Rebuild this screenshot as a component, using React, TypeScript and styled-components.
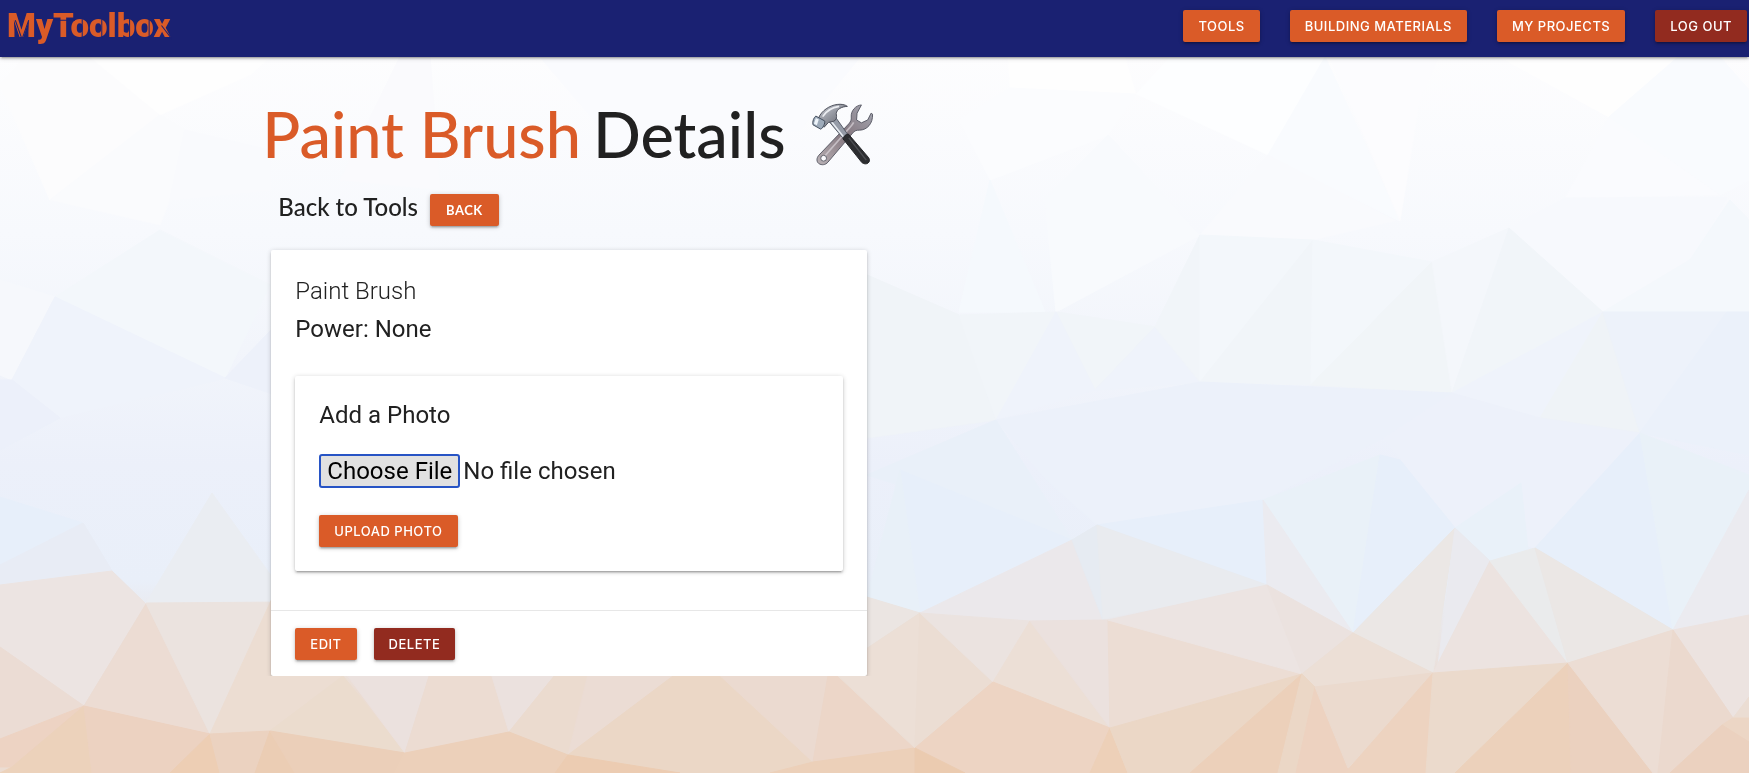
import React from "react";
import styled, { createGlobalStyle, css } from "styled-components";

const colors = {
  navy: "#1a2172",
  orange: "#da5b28",
  maroon: "#922b1f",
  ink: "#212121",
};

const raised =
  "0 2px 2px 0 rgba(0,0,0,0.14), 0 3px 1px -2px rgba(0,0,0,0.12), 0 1px 5px 0 rgba(0,0,0,0.2)";

const GlobalStyle = createGlobalStyle`
  *, *::before, *::after { box-sizing: border-box; }
  body {
    margin: 0;
    background: #eef2fa;
    color: ${colors.ink};
    font-family: Inter, "Liberation Sans", sans-serif;
    font-size: 16px;
    line-height: 24px;
  }
`;

const Backdrop = styled.svg`
  position: fixed;
  inset: 0;
  z-index: -1;
  width: 100%;
  height: 100%;
`;

const NavBar = styled.nav`
  display: flex;
  align-items: flex-start;
  justify-content: space-between;
  height: 57px;
  padding: 10px 2px 0 7px;
  background: ${colors.navy};
  box-shadow: ${raised};
`;

const Brand = styled.a`
  position: relative;
  color: ${colors.orange};
  font-family: Roboto, sans-serif;
  font-weight: 900;
  font-size: 33px;
  line-height: 32px;
  text-decoration: none;
`;

const StencilCuts = styled.svg`
  position: absolute;
  left: 0;
  top: 0;
  width: 170px;
  height: 35px;
  fill: none;
  stroke: ${colors.navy};
  stroke-width: 1;
`;

const NavLinks = styled.ul`
  display: flex;
  gap: 30px;
  margin: 0;
  padding: 0;
  list-style: none;
`;

const buttonLook = css<{ $danger?: boolean }>`
  display: inline-block;
  height: 32px;
  padding: 0 15px;
  border: 0;
  border-radius: 2px;
  background: ${(p) => (p.$danger ? colors.maroon : colors.orange)};
  box-shadow: ${raised};
  color: #fff;
  font-family: inherit;
  font-size: 13px;
  font-weight: 500;
  line-height: 32px;
  letter-spacing: 0.5px;
  text-align: center;
  text-decoration: none;
  text-transform: uppercase;
  white-space: nowrap;
  cursor: pointer;
`;

const LinkButton = styled.a<{ $danger?: boolean }>`
  ${buttonLook}
`;

const BackButton = styled(LinkButton)`
  padding: 0 16px;
  font-weight: 700;
`;

const Button = styled.button<{ $danger?: boolean }>`
  ${buttonLook}
`;

const Container = styled.main`
  width: 70%;
  margin: 0 auto;
`;

const Title = styled.h1`
  display: flex;
  align-items: center;
  gap: 26px;
  margin: 42px 0 25px;
  font-family: Lato, sans-serif;
  font-weight: 500;
  font-size: 63px;
  line-height: 70px;
`;

const TitleText = styled.span`
  display: flex;
  gap: 12px;
`;

const ToolName = styled.span`
  color: ${colors.orange};
`;

const ToolsIcon = styled.svg`
  width: 62px;
  height: 64px;
`;

const BackRow = styled.div`
  display: flex;
  align-items: flex-start;
  gap: 12px;
  padding: 0 16px;
  font-family: Lato, sans-serif;
`;

const BackLabel = styled.h2`
  margin: 0;
  font-weight: 500;
  font-size: 24px;
  line-height: 26px;
`;

const Column = styled.div`
  width: 50%;
  margin-top: 24px;
  padding: 0 7px 0 9px;
`;

const Card = styled.section`
  border-radius: 2px;
  background: #fff;
  box-shadow: ${raised};
`;

const CardContent = styled.div`
  padding: 24px;
`;

const cardType = css`
  font-family: Roboto, sans-serif;
  font-size: 24px;
`;

const CardTitle = styled.h3`
  ${cardType}
  margin: 0 0 2px;
  font-weight: 300;
  line-height: 34px;
`;

const CardText = styled.p`
  ${cardType}
  margin: 0;
  line-height: 38px;
`;

const PhotoCard = styled(Card)`
  margin: 28px 0 15px;
`;

const PhotoForm = styled.form`
  display: flex;
  flex-direction: column;
  align-items: flex-start;
  padding: 24px;
`;

const PhotoLabel = styled.label`
  ${cardType}
  line-height: 30px;
`;

const FileInput = styled.input`
  ${cardType}
  width: 100%;
  margin: 24px 0 27px;
  color: ${colors.ink};
  line-height: 30px;

  &::file-selector-button {
    margin: 0 3px 0 0;
    padding: 0 6px;
    border: 2px solid #2754c5;
    border-radius: 3px;
    background: #e1e1e1;
    color: #000;
    font: inherit;
    line-height: 30px;
  }
`;

const CardActions = styled.div`
  display: flex;
  gap: 17px;
  padding: 17px 24px 16px;
  border-top: 1px solid rgba(160, 160, 160, 0.25);
`;

const facets: [string, string][] = [
  ["#fcfcfd", "0,85 25,57 90,57 160,115 50,200"],
  ["#fafbfd", "160,115 185,130 170,200 160,225 50,200"],
  ["#fefefe", "90,57 270,57 250,75 160,115"],
  ["#f9fafd", "185,130 270,150 270,190 170,200"],
  ["#f6f8fc", "0,280 55,297 12,380 0,375"],
  ["#f3f7fb", "55,297 160,230 270,285 225,378"],
  ["#eff3fb", "12,380 55,297 225,378 60,418"],
  ["#edf1fa", "225,378 290,310 290,400"],
  ["#ecf0fa", "0,380 12,380 60,418 0,450"],
  ["#e7effa", "0,497 83,523 0,565"],
  ["#e8ecf5", "83,523 112,571 0,585 0,565"],
  ["#eaedf2", "212,493 290,602 146,603"],
  ["#fafbfe", "540,57 860,57 800,130 620,150"],
  ["#fafafd", "400,57 430,57 440,190 340,180"],
  ["#fefefe", "1008,57 1125,57 1136,94 1010,88"],
  ["#fbfcfe", "1010,88 1136,94 1108,135 990,180 959,120"],
  ["#fdfeff", "1136,94 1170,57 1325,57 1268,155"],
  ["#f9fbfe", "1325,57 1400,221 1268,155"],
  ["#fcfcfe", "1330,57 1438,57 1420,100 1400,221"],
  ["#fefefe", "1500,57 1678,57 1609,117"],
  ["#f9fbfe", "1678,57 1720,57 1749,90 1749,180 1720,195 1609,117"],
  ["#fafbfe", "1609,117 1720,195 1565,198"],
  ["#f8fafd", "1108,135 1200,235 1056,312 1045,200"],
  ["#f9fafd", "1268,155 1395,221 1313,240 1200,235"],
  ["#f5f9fd", "990,180 1045,312 959,312"],
  ["#f7f9fd", "1509,228 1565,198 1727,198 1690,260 1603,312"],
  ["#f4f8fc", "1730,200 1749,220 1749,312 1603,312 1690,260"],
  ["#f0f4f8", "867,275 959,315 996,420 867,438"],
  ["#f1f5f9", "959,315 1056,312 996,420"],
  ["#f1f5f9", "1056,312 1155,327 1095,390"],
  ["#eff3fb", "996,420 1056,312 1095,390"],
  ["#eff3fb", "1155,327 1200,382 1095,390"],
  ["#f1f5f9", "1155,327 1200,235 1200,382"],
  ["#f3f7fb", "1200,235 1313,240 1200,382"],
  ["#f1f5f9", "1313,240 1311,385 1200,382"],
  ["#f3f7fb", "1313,240 1432,262 1311,385"],
  ["#f1f5f8", "1432,262 1452,393 1311,385"],
  ["#f4f7fb", "1432,262 1509,228 1452,393"],
  ["#f1f5f9", "1509,228 1603,312 1452,393"],
  ["#eff3fb", "1603,312 1540,418 1452,393"],
  ["#eff3f7", "1603,312 1640,433 1540,418"],
  ["#edf2fa", "1603,312 1727,312 1640,433"],
  ["#ebf1fa", "1727,312 1749,312 1749,455 1640,433"],
  ["#ecf1fa", "996,420 1200,382 1452,393 1384,438 1263,500 1097,525 1047,480"],
  ["#edf1fa", "1452,393 1540,418 1640,433 1535,548 1455,528 1384,438"],
  ["#e9f0f9", "867,475 996,420 1072,540"],
  ["#e7effa", "900,470 1072,540 920,613"],
  ["#e8f0f8", "900,470 920,613 867,597"],
  ["#e7effa", "1097,525 1263,500 1267,585"],
  ["#e9f1f8", "1263,500 1380,455 1353,633"],
  ["#e7effa", "1380,455 1400,460 1455,528 1353,633"],
  ["#e9f1f9", "1455,528 1521,483 1528,550 1490,561"],
  ["#e7effa", "1535,548 1640,433 1673,630"],
  ["#e9f1f8", "1640,433 1749,475 1749,490 1673,630"],
  ["#ebe8eb", "920,613 1072,540 1103,620 1030,621"],
  ["#e6ebf2", "1072,540 1097,525 1103,620"],
  ["#e9ebef", "1097,525 1267,585 1103,619"],
  ["#ebebf0", "1263,500 1353,633 1267,585"],
  ["#ebe7e5", "1353,633 1455,528 1433,673"],
  ["#eaeaef", "1455,528 1490,561 1437,673"],
  ["#ece3e0", "1490,561 1568,663 1433,673"],
  ["#eaebec", "1490,561 1535,548 1568,663"],
  ["#ebe7e5", "1535,548 1673,630 1568,663"],
  ["#ebebf0", "1673,630 1749,490 1749,615"],
  ["#ece4e2", "0,585 112,571 146,604 84,706 0,647"],
  ["#ebdcd4", "0,647 84,706 0,739"],
  ["#ecdcd3", "146,604 210,734 84,706"],
  ["#ebe3df", "146,603 290,602 210,734"],
  ["#ecddd2", "285,570 343,676 270,731 210,734"],
  ["#ebdcce", "343,676 405,753 270,731"],
  ["#ebe1de", "343,670 431,670 405,753"],
  ["#edd3c3", "0,739 84,706 12,767 0,767"],
  ["#ecd2bb", "84,706 92,773 0,773 12,767"],
  ["#ecd2c1", "84,706 210,734 170,773 92,773"],
  ["#edceb4", "210,734 220,773 170,773"],
  ["#ebd2c0", "210,734 270,731 255,773 220,773"],
  ["#ebcdb4", "270,731 295,773 255,773"],
  ["#ebcfb9", "270,731 405,753 395,773 295,773"],
  ["#ecdcd2", "431,670 490,670 509,732 405,753"],
  ["#ebe1de", "490,670 559,670 509,732"],
  ["#ebdbcf", "559,670 589,670 568,755 509,732"],
  ["#ebdcd4", "589,670 681,670 568,755"],
  ["#ebd7c6", "681,670 714,670 813,762 770,773 680,773 568,755"],
  ["#ebdad0", "714,670 829,670 813,762"],
  ["#ecd6c8", "829,670 838,676 915,748 813,762"],
  ["#ecd0ba", "405,753 509,732 568,755 555,773 395,773"],
  ["#ecccb2", "568,755 680,773 555,773"],
  ["#ecd0b9", "813,762 915,748 915,773 770,773"],
  ["#ebe5e2", "860,595 920,613 860,653"],
  ["#ecdfd6", "920,613 915,748 838,676 860,653"],
  ["#ebddd3", "920,613 993,682 915,748"],
  ["#ebe3e0", "920,613 1030,621 993,682"],
  ["#ecdfd6", "1030,621 1110,728 993,682"],
  ["#ebe1de", "1030,621 1108,620 1110,728"],
  ["#ecddd4", "1108,620 1302,674 1110,728"],
  ["#ece4e2", "1108,620 1267,585 1302,674"],
  ["#ebe2df", "1267,585 1353,633 1302,674"],
  ["#ecdfd6", "1353,633 1433,673 1315,687 1302,674"],
  ["#edd4c3", "993,682 1110,728 1090,773 965,773 915,748"],
  ["#edd0b8", "1110,728 1128,773 1090,773"],
  ["#ebd7c6", "1110,728 1302,674 1190,773 1128,773"],
  ["#ecd0ba", "1302,674 1278,773 1190,773"],
  ["#ebcbb0", "915,748 965,773 915,773"],
  ["#ebd7c6", "1302,674 1315,687 1296,773 1278,773"],
  ["#edd2c0", "1315,687 1348,768 1348,773 1296,773"],
  ["#ebdace", "1315,687 1433,673 1348,768"],
  ["#edd3c0", "1433,673 1426,773 1345,773"],
  ["#ebdacc", "1433,673 1568,663 1455,773 1426,773"],
  ["#ecd1bb", "1568,663 1571,773 1455,773"],
  ["#ebd1bf", "1568,663 1653,773 1571,773"],
  ["#ecddd4", "1568,663 1673,630 1658,773 1653,773"],
  ["#ece3e0", "1673,630 1749,615 1749,697 1733,718"],
  ["#ebd9ce", "1673,630 1733,718 1722,725 1670,773 1658,773"],
  ["#ebddd3", "1733,718 1749,697 1749,718"],
  ["#ecd6c5", "1722,725 1733,718 1749,718 1749,742"],
  ["#ebd1bf", "1722,725 1749,742 1749,773 1670,773"],
];

function LowPolyBackdrop() {
  return (
    <Backdrop viewBox="0 0 1749 773" preserveAspectRatio="none" aria-hidden="true">
      <defs>
        <linearGradient id="sky" x1="0" y1="0" x2="0" y2="1">
          <stop offset="0.07" stopColor="#fdfdfe" />
          <stop offset="0.3" stopColor="#f7f9fd" />
          <stop offset="0.45" stopColor="#f2f5fb" />
          <stop offset="0.6" stopColor="#ecf0fa" />
          <stop offset="0.75" stopColor="#e9eff9" />
          <stop offset="0.9" stopColor="#ebdcd2" />
        </linearGradient>
      </defs>
      <rect width="1749" height="773" fill="url(#sky)" />
      {facets.map(([fill, points], i) => (
        <polygon key={i} fill={fill} stroke={fill} strokeWidth="1" points={points} />
      ))}
    </Backdrop>
  );
}

function HammerAndWrench() {
  return (
    <ToolsIcon viewBox="0 0 64 64" role="img" aria-label="Hammer and wrench">
      <defs>
        <linearGradient id="steel" x1="0" y1="0" x2="1" y2="1">
          <stop offset="0" stopColor="#c9ccd4" />
          <stop offset="0.5" stopColor="#8f929b" />
          <stop offset="1" stopColor="#5d5f68" />
        </linearGradient>
        <linearGradient id="shaft" x1="0" y1="1" x2="1" y2="0">
          <stop offset="0" stopColor="#b9b2b6" />
          <stop offset="0.5" stopColor="#85777f" />
          <stop offset="1" stopColor="#a5a8b3" />
        </linearGradient>
      </defs>
      <path
        d="M51 2c-6 .5-11 6-10.500 12.500.3 3-.5 4.500-2.500 7L7 54c-2.500 3-2.500 6.500 0 8.500 3 2 7 1.500 9.500-1.500L42 31c2-2.500 4-3 7-3 8 0 14-7 13.500-16.500L61 10.500l-3.500 7-6.500 3-5-3 .5-7z"
        fill="url(#shaft)"
        stroke="#5a5b66"
        strokeWidth="1"
      />
      <path d="M43 20c-2 4-5 6-8 10L12 56" stroke="#d8d3d8" strokeWidth="1.800" fill="none" opacity="0.7" />
      <circle cx="12" cy="57" r="3" fill="#fafafd" stroke="#5f6069" strokeWidth="1" />
      <path d="M17.500 19l7-4L38 34l-5 3.500z" fill="#959ba7" stroke="#555a66" strokeWidth="1" />
      <path d="M20 19l14 18" stroke="#e9edf2" strokeWidth="1.600" />
      <path
        d="M32 37c0-2 3-5 5.500-5l21 24.500c3 4.500-2.500 8.500-7 5z"
        fill="#2c2d30"
        stroke="#202124"
        strokeWidth="1"
      />
      <path d="M38 36l18 23" stroke="#4b4d51" strokeWidth="1.500" fill="none" />
      <path
        d="M7 15c3-7 11-12.500 19-13.500 4-.5 8 0 10.500 2-6 .2-11 3-11.500 7.500 1 4 0 7-3 8l-5 1-4.500 5z"
        fill="url(#steel)"
        stroke="#4c505b"
        strokeWidth="1"
      />
      <path d="M11 14c4-6 10-9.500 17-10.500" stroke="#eceef2" strokeWidth="1.600" fill="none" />
      <path
        d="M4 13.500l9 5c1 2-2 8-4 8.500l-8-4.500c-1-3 1-8 3-9z"
        fill="#9eabba"
        stroke="#424c5c"
        strokeWidth="1"
      />
      <path d="M4 15.500l-2 6 3 1.500 2-6z" fill="#eef4fa" />
    </ToolsIcon>
  );
}

export default function App() {
  return (
    <>
      <GlobalStyle />
      <LowPolyBackdrop />
      <NavBar>
        <Brand href="#home">
          MyToolbox
          <StencilCuts viewBox="0 0 165 34" aria-hidden="true">
            <path d="M8 10l6 17M21 10l-6 17M46 10h20M73 9v19M92 9v19M119 9v19M138 9v19M150 15l10 13" />
          </StencilCuts>
        </Brand>
        <NavLinks>
          <li><LinkButton href="#tools">Tools</LinkButton></li>
          <li><LinkButton href="#materials">Building Materials</LinkButton></li>
          <li><LinkButton href="#projects">My Projects</LinkButton></li>
          <li><LinkButton href="#logout" $danger>Log Out</LinkButton></li>
        </NavLinks>
      </NavBar>
      <Container>
        <Title>
          <TitleText>
            <ToolName>Paint Brush</ToolName>
            <span>Details</span>
          </TitleText>
          <HammerAndWrench />
        </Title>
        <BackRow>
          <BackLabel>Back to Tools</BackLabel>
          <BackButton href="#tools">Back</BackButton>
        </BackRow>
        <Column>
          <Card>
            <CardContent>
              <CardTitle>Paint Brush</CardTitle>
              <CardText>Power: None</CardText>
              <PhotoCard>
                <PhotoForm>
                  <PhotoLabel htmlFor="photo">Add a Photo</PhotoLabel>
                  <FileInput id="photo" type="file" name="photo" />
                  <Button type="button">Upload Photo</Button>
                </PhotoForm>
              </PhotoCard>
            </CardContent>
            <CardActions>
              <LinkButton href="#edit">Edit</LinkButton>
              <Button type="button" $danger>Delete</Button>
            </CardActions>
          </Card>
        </Column>
      </Container>
    </>
  );
}
